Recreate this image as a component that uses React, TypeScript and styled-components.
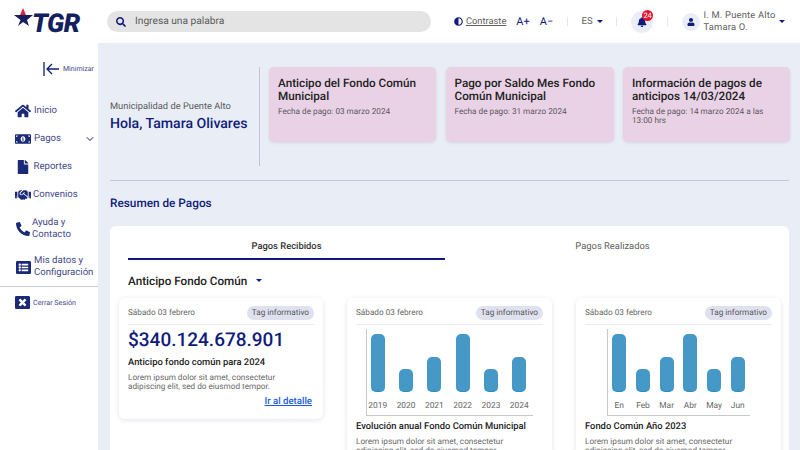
import React from 'react'
import styled, { createGlobalStyle } from 'styled-components'
import { FaAdjust, FaBell, FaFile, FaHandshake, FaHome, FaListAlt, FaMoneyBillAlt, FaPhoneAlt, FaSearch, FaUser, FaWindowClose } from 'react-icons/fa'
import { ChevronDown } from 'lucide-react'

const NAVY = '#0f1c7c'
const NAV_TEXT = '#3f4888'

const GlobalStyle = createGlobalStyle`
  html, body {
    margin: 0;
    height: 450px;
    overflow: hidden;
    background: #e9edf5;
    font-family: Roboto, "Liberation Sans", sans-serif;
    text-rendering: geometricPrecision;
  }
  * { box-sizing: border-box; }
`

const Page = styled.div`
  display: flex;
  flex-direction: column;
  width: 800px;
  height: 450px;
  overflow: hidden;
`

const Header = styled.header`
  display: flex;
  align-items: center;
  flex: 0 0 43px;
  background: #fff;
`

const Logo = styled.div`
  display: flex;
  align-items: center;
  width: 107px;
  padding-left: 14px;

  svg {
    flex: none;
    margin-top: -9px;
  }
`

const LogoText = styled.span`
  margin-left: -2px;
  margin-top: 4px;
  font-size: 26px;
  line-height: 1;
  font-weight: 900;
  font-style: italic;
  letter-spacing: -0.5px;
  color: #12205f;
`

const Search = styled.div`
  display: flex;
  align-items: center;
  gap: 9px;
  width: 324px;
  height: 21px;
  padding-left: 9px;
  border-radius: 11px;
  background: #e4e4e4;
  font-size: 10.2px;
  color: #5a5a5a;
  svg { color: ${NAVY}; }
`

const Contrast = styled.div`
  display: flex;
  align-items: center;
  gap: 3px;
  margin-left: 23px;
  font-size: 9.3px;
  color: #606060;
  text-decoration: underline;
  svg { color: ${NAVY}; }
`

const FontSize = styled.span`
  margin-left: 10px;
  font-size: 11px;
  color: ${NAVY};
`

const Separator = styled.span`
  width: 1px;
  height: 9px;
  margin: 0 13.7px;
  background: #e6e6e6;
`

const Lang = styled.div`
  display: flex;
  align-items: center;
  gap: 4px;
  font-size: 9.6px;
  color: #606060;
`

const Caret = styled.span`
  width: 0;
  height: 0;
  border-left: 3px solid transparent;
  border-right: 3px solid transparent;
  border-top: 3px solid ${NAVY};
`

const IconCircle = styled.div<{ $size: number }>`
  position: relative;
  display: flex;
  align-items: center;
  justify-content: center;
  width: ${({ $size }) => $size}px;
  height: ${({ $size }) => $size}px;
  border-radius: 50%;
  background: #e9edf5;
  color: ${NAVY};
`

const Badge = styled.span`
  position: absolute;
  top: -1px;
  right: 0;
  min-width: 11px;
  height: 11px;
  border-radius: 6px;
  background: #e8112d;
  color: #fff;
  font-size: 7.5px;
  line-height: 11px;
  text-align: center;
`

const UserMenu = styled.div`
  display: flex;
  align-items: center;
  gap: 4px;
`

const UserName = styled.div`
  width: 70px;
  margin-right: 1px;
  white-space: nowrap;
  font-size: 9.4px;
  line-height: 11.4px;
  letter-spacing: 0.2px;
  color: #606060;
`

const Body = styled.div`
  display: flex;
  flex: 1;
  min-height: 0;
`

const Sidebar = styled.aside`
  flex: none;
  width: 98px;
  background: #fff;
`

const Minimize = styled.div`
  display: flex;
  align-items: center;
  gap: 3px;
  height: 54px;
  padding: 0 0 2px 43px;
  font-size: 7px;
  color: ${NAV_TEXT};
  svg { flex: none; }
`

const NavItem = styled.div<{ $height?: number; $gap?: number }>`
  position: relative;
  display: grid;
  grid-template-columns: 16px 1fr;
  column-gap: ${({ $gap }) => $gap ?? 3}px;
  align-items: center;
  height: ${({ $height }) => $height ?? 28}px;
  padding-left: 15px;
  font-size: 9.6px;
  line-height: 12px;
  color: ${NAV_TEXT};
  svg { justify-self: center; color: #1b2a78; }
`

const NavChevron = styled.span`
  position: absolute;
  right: 2px;
  top: 8px;
  display: flex;
`

const SidebarRule = styled.hr`
  height: 1px;
  margin: 0;
  border: 0;
  background: #c9cbd6;
`

const Logout = styled.div`
  display: flex;
  align-items: center;
  gap: 3px;
  padding: 8px 0 0 15px;
  font-size: 7.2px;
  color: ${NAV_TEXT};
  svg { color: #1b2a78; }
`

const Main = styled.main`
  flex: 1;
  min-width: 0;
  padding: 24px 11px 0 12px;
`

const Notices = styled.section`
  display: flex;
  align-items: flex-start;
  padding-bottom: 14px;
  border-bottom: 1px solid #c3c7de;
`

const Greeting = styled.div`
  align-self: center;
  flex: 0 0 149px;
`

const Municipality = styled.div`
  font-size: 9.3px;
  color: #5a5a5a;
`

const Hello = styled.h1`
  margin: 4px 0 0;
  font-size: 14.1px;
  font-weight: 500;
  color: ${NAVY};
`

const NoticeGrid = styled.div`
  display: grid;
  grid-template-columns: 167px 168px 167px;
  column-gap: 9.5px;
  height: 99px;
  padding-left: 9px;
  border-left: 1px solid #bfc3d8;
`

const Notice = styled.article`
  height: 75px;
  padding: 10px 9px;
  border-radius: 5px;
  background: #e9d2e6;
  box-shadow: 0 1px 3px rgba(60, 60, 110, 0.12);
`

const NoticeTitle = styled.h3`
  margin: 0;
  font-size: 11.7px;
  line-height: 13.4px;
  font-weight: 500;
  color: #222;
`

const NoticeDate = styled.p`
  margin: 4px 0 0;
  font-size: 8.2px;
  line-height: 9.5px;
  color: #5c5560;
`

const SectionTitle = styled.h2`
  margin: 16px 0 0;
  height: 29px;
  font-size: 11.8px;
  line-height: 13px;
  font-weight: 500;
  color: ${NAVY};
`

const Panel = styled.section`
  height: 240px;
  padding: 0 9px;
  border-radius: 6px 6px 0 0;
  background: #fff;
`

const Tabs = styled.div`
  display: grid;
  grid-template-columns: 317px 335px;
  margin-left: 9px;
`

const Tab = styled.div<{ $active?: boolean }>`
  height: 34px;
  padding-top: 15px;
  font-size: 9.4px;
  line-height: 12px;
  font-weight: ${({ $active }) => ($active ? 500 : 400)};
  text-align: center;
  color: ${({ $active }) => ($active ? '#333' : '#606060')};
  border-bottom: 2px solid ${({ $active }) => ($active ? NAVY : 'transparent')};
`

const Filter = styled.div`
  display: flex;
  align-items: center;
  gap: 9px;
  height: 38px;
  margin-left: 9px;
  padding-top: 3px;
  font-size: 11.7px;
  font-weight: 500;
  color: #222;
`

const Cards = styled.div`
  display: grid;
  grid-template-columns: 204px 205px 205px;
  column-gap: 24px;
  align-items: start;
`

const Card = styled.article<{ $height?: number }>`
  height: ${({ $height }) => ($height ? `${$height}px` : 'auto')};
  padding: 6px 9px 0;
  border-radius: 6px;
  background: #fff;
  box-shadow: 0 1px 5px rgba(40, 50, 100, 0.13);
`

const CardTop = styled.div`
  display: flex;
  align-items: center;
  justify-content: space-between;
  height: 21px;
  padding-bottom: 2px;
  border-bottom: 1px solid #ececf0;
  font-size: 8.2px;
  color: #666;
`

const Tag = styled.span`
  height: 14px;
  padding: 0 5px;
  border-radius: 7px;
  background: #dfe1ef;
  font-size: 8.2px;
  line-height: 14px;
  color: #555;
`

const Amount = styled.div`
  margin-top: 3px;
  font-size: 19px;
  line-height: 24px;
  font-weight: 500;
  color: ${NAVY};
`

const CardTitle = styled.h4`
  margin: 5px 0 0;
  font-size: 9.4px;
  line-height: 12px;
  font-weight: 500;
  color: #222;
`

const CardText = styled.p`
  max-width: 172px;
  margin: 4.5px 0 0;
  font-size: 8.2px;
  line-height: 9.5px;
  color: #666;
`

const DetailLink = styled.a`
  display: block;
  margin: 3.5px 2px 0 0;
  font-size: 9.6px;
  line-height: 12px;
  font-weight: 500;
  text-align: right;
  text-decoration: underline;
  color: #1a5ce0;
`

const ChartWrap = styled.div`
  display: flex;
  justify-content: center;
  margin-top: 4px;
`

const ChartFrame = styled.div<{ $pad: number; $gap: number }>`
  display: flex;
  align-items: flex-start;
  gap: ${({ $gap }) => $gap}px;
  height: 87px;
  padding: 5px 5px 0 ${({ $pad }) => $pad}px;
  border-left: 1px solid #c8c8c8;
  border-bottom: 1px solid #c8c8c8;
`

const BarColumn = styled.div<{ $width: number }>`
  display: flex;
  flex-direction: column;
  align-items: center;
  width: ${({ $width }) => $width}px;
`

const BarTrack = styled.div`
  display: flex;
  align-items: flex-end;
  height: 58px;
`

const Bar = styled.div`
  width: 14px;
  border-radius: 5px;
  background: #4698c6;
  border-bottom: 1px solid #2b8fc4;
`

const BarLabel = styled.span`
  margin-top: 9px;
  font-size: 8.4px;
  line-height: 11px;
  color: #666;
`

const MinimizeIcon = () => (
  <svg width="17" height="16" viewBox="0 0 17 16" fill="none" stroke={NAVY} strokeWidth="1.3">
    <path d="M1 1v14M16 8H4M9 3 4 8l5 5" />
  </svg>
)

const LogoStar = () => (
  <svg width="20" height="18" viewBox="0 0 20 18">
    <path d="M0 7h19l-6 5 2 6-6-4-5 4 2.500-6z" fill="#12205f" />
    <path d="M9 0l3 7H6z" fill="#d8263a" />
  </svg>
)

const Placeholder = 'Lorem ipsum dolor sit amet, consectetur adipiscing elit, sed do eiusmod tempor.'
const heights = [58, 23, 35, 58, 23, 35]

interface IChartProps {
  labels: string[]
  width: number
  gap: number
  pad: number
}

const BarChart = ({ labels, width, gap, pad }: IChartProps) => (
  <ChartWrap>
    <ChartFrame $pad={pad} $gap={gap}>
      {labels.map((label, i) => (
        <BarColumn key={label} $width={width}>
          <BarTrack>
            <Bar style={{ height: heights[i] }} />
          </BarTrack>
          <BarLabel>{label}</BarLabel>
        </BarColumn>
      ))}
    </ChartFrame>
  </ChartWrap>
)

const CardHead = () => (
  <CardTop>
    <span>Sábado 03 febrero</span>
    <Tag>Tag informativo</Tag>
  </CardTop>
)

const App = () => (
  <Page>
    <GlobalStyle />
    <Header>
      <Logo>
        <LogoStar />
        <LogoText>TGR</LogoText>
      </Logo>
      <Search>
        <FaSearch size={10} />
        Ingresa una palabra
      </Search>
      <Contrast>
        <FaAdjust size={9} />
        Contraste
      </Contrast>
      <FontSize>A+</FontSize>
      <FontSize>A−</FontSize>
      <Separator />
      <Lang>
        ES <Caret />
      </Lang>
      <Separator />
      <IconCircle $size={22}>
        <FaBell size={10} />
        <Badge>24</Badge>
      </IconCircle>
      <Separator />
      <UserMenu>
        <IconCircle $size={18}>
          <FaUser size={8} />
        </IconCircle>
        <UserName>I. M. Puente Alto<br />Tamara O.</UserName>
        <Caret />
      </UserMenu>
    </Header>
    <Body>
      <Sidebar>
        <Minimize>
          <MinimizeIcon />
          Minimizar
        </Minimize>
        <NavItem><FaHome size={16} />Inicio</NavItem>
        <NavItem>
          <FaMoneyBillAlt size={16} />Pagos
          <NavChevron><ChevronDown size={12} color={NAVY} /></NavChevron>
        </NavItem>
        <NavItem $gap={2.5}><FaFile size={14} />Reportes</NavItem>
        <NavItem $gap={2}><FaHandshake size={16} />Convenios</NavItem>
        <NavItem $height={39} $gap={1}><FaPhoneAlt size={14} /><span>Ayuda y<br />Contacto</span></NavItem>
        <NavItem $height={38}><FaListAlt size={15} /><span>Mis datos y<br />Configuración</span></NavItem>
        <SidebarRule />
        <Logout>
          <FaWindowClose size={15} />
          Cerrar Sesión
        </Logout>
      </Sidebar>
      <Main>
        <Notices>
          <Greeting>
            <Municipality>Municipalidad de Puente Alto</Municipality>
            <Hello>Hola, Tamara Olivares</Hello>
          </Greeting>
          <NoticeGrid>
            <Notice>
              <NoticeTitle>Anticipo del Fondo Común Municipal</NoticeTitle>
              <NoticeDate>Fecha de pago: 03 marzo 2024</NoticeDate>
            </Notice>
            <Notice>
              <NoticeTitle>Pago por Saldo Mes Fondo Común Municipal</NoticeTitle>
              <NoticeDate>Fecha de pago: 31 marzo 2024</NoticeDate>
            </Notice>
            <Notice>
              <NoticeTitle>Información de pagos de anticipos 14/03/2024</NoticeTitle>
              <NoticeDate>Fecha de pago: 14 marzo 2024 a las 13:00 hrs</NoticeDate>
            </Notice>
          </NoticeGrid>
        </Notices>
        <SectionTitle>Resumen de Pagos</SectionTitle>
        <Panel>
          <Tabs>
            <Tab $active>Pagos Recibidos</Tab>
            <Tab>Pagos Realizados</Tab>
          </Tabs>
          <Filter>
            Anticipo Fondo Común <Caret />
          </Filter>
          <Cards>
            <Card $height={121}>
              <CardHead />
              <Amount>$340.124.678.901</Amount>
              <CardTitle>Anticipo fondo común para 2024</CardTitle>
              <CardText>{Placeholder}</CardText>
              <DetailLink>Ir al detalle</DetailLink>
            </Card>
            <Card>
              <CardHead />
              <BarChart labels={['2019', '2020', '2021', '2022', '2023', '2024']} width={18.3} gap={10} pad={2} />
              <CardTitle>Evolución anual Fondo Común Municipal</CardTitle>
              <CardText>{Placeholder}</CardText>
            </Card>
            <Card>
              <CardHead />
              <BarChart labels={['En', 'Feb', 'Mar', 'Abr', 'May', 'Jun']} width={14} gap={9.7} pad={4} />
              <CardTitle>Fondo Común Año 2023</CardTitle>
              <CardText>{Placeholder}</CardText>
            </Card>
          </Cards>
        </Panel>
      </Main>
    </Body>
  </Page>
)

export default App
